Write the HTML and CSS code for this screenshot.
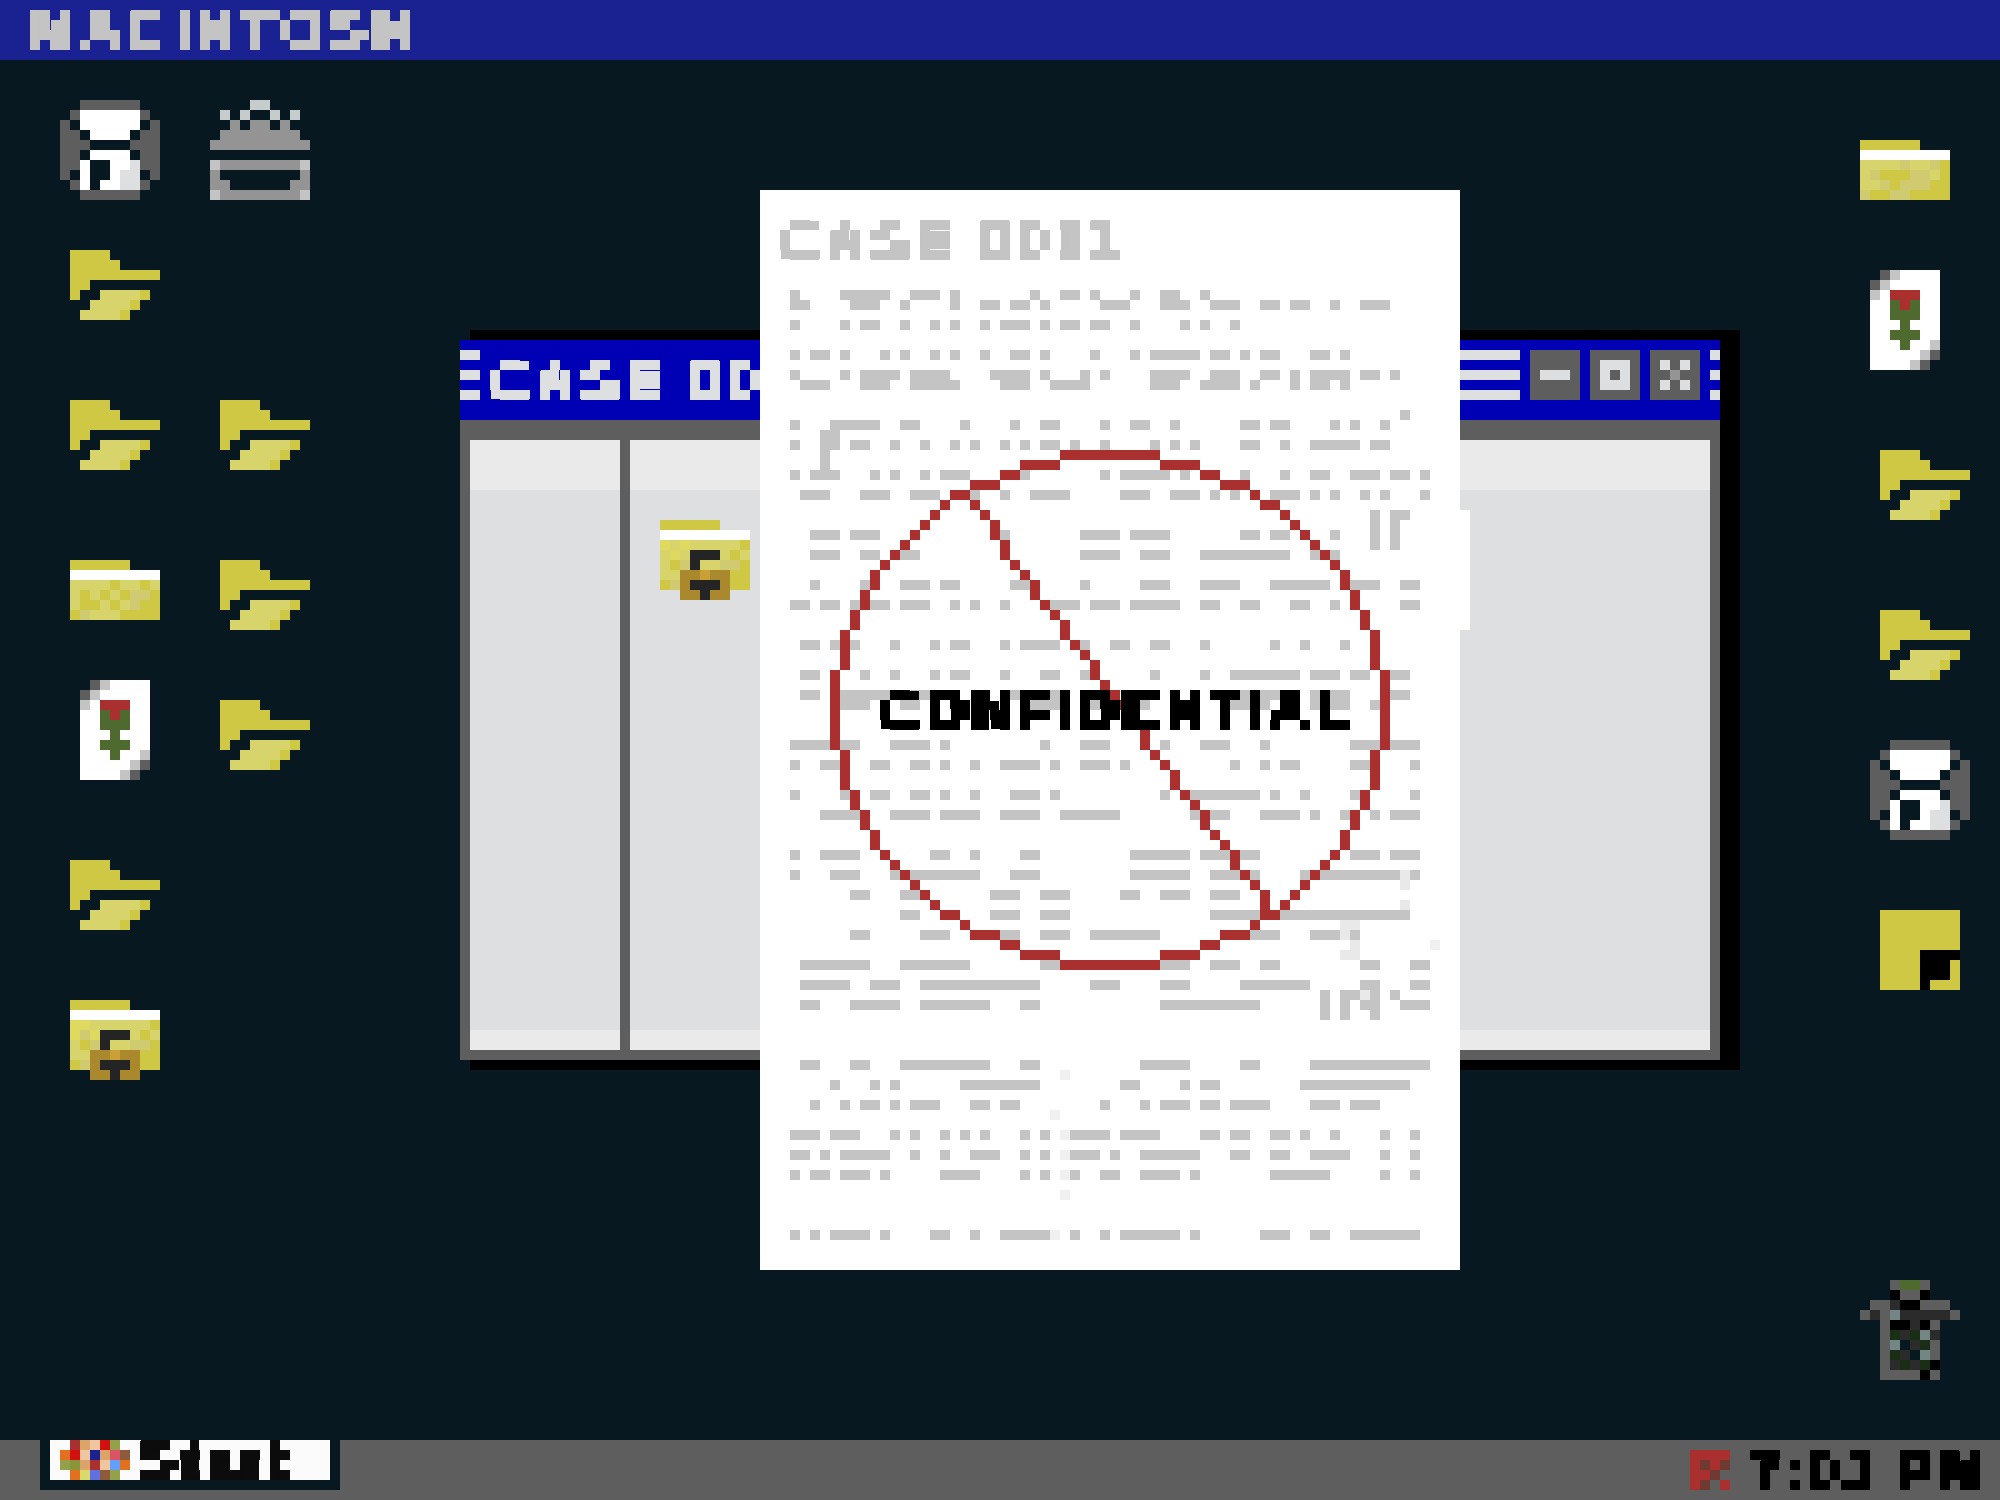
FILE: index.html
```html
<!DOCTYPE html>
<html lang="en">
<head>
  <meta charset="UTF-8">
  <title>Macintosh</title>
  <link rel="stylesheet" href="styles.css">
</head>
<body>

  <!-- shared pixel icons, one unit = one 10px cell -->
  <svg class="defs" aria-hidden="true">
    <filter id="pixelate" x="0" y="0" width="100%" height="100%" color-interpolation-filters="sRGB">
      <feFlood x="4" y="4" width="2" height="2" flood-color="#000"/>
      <feComposite width="10" height="10"/>
      <feTile result="grid"/>
      <feComposite in="SourceGraphic" in2="grid" operator="in"/>
      <feMorphology operator="dilate" radius="4"/>
      <feComponentTransfer><feFuncA type="discrete" tableValues="0 1"/></feComponentTransfer>
    </filter>

    <g id="open-folder">
      <path class="yd" d="M0 .5H4M0 1.5H5M0 2.5H9M0 3.5H2M0 4.5H1M7 4.5H8M6 5.5H7M5 6.5H6"/>
      <path class="yl" d="M3 4.5H7M2 5.5H6M1 6.5H5"/>
    </g>
    <g id="closed-folder">
      <path class="yd" d="M0 .5H6M4 2.5H5M7 2.5H8M1 3.5H2M3 3.5H4M5 3.5H6M8 3.5H9M1 4.5H3M4 4.5H5M7 4.5H9M0 5.5H1M5 5.5H9"/>
      <path class="wh" d="M0 1.5H9"/>
      <path class="yl" d="M0 2.5H4M5 2.5H7M8 2.5H9M0 3.5H1M2 3.5H3M4 3.5H5M0 4.5H1M3 4.5H4M5 4.5H6M2 5.5H5"/>
      <path class="yp" d="M6 3.5H8M6 4.5H7M1 5.5H2"/>
    </g>
    <g id="closed-folder-b">
      <path class="yd" d="M0 .5H6M8 2.5H9M2 3.5H5M8 3.5H9M3 4.5H4M7 4.5H9M1 5.5H3M5 5.5H9"/>
      <path class="wh" d="M0 1.5H9"/>
      <path class="yl" d="M0 2.5H4M5 2.5H7M0 3.5H1M7 3.5H8M0 4.5H2"/>
      <path class="yp" d="M4 2.5H5M7 2.5H8M1 3.5H2M5 3.5H7M2 4.5H3M4 4.5H7M0 5.5H1M3 5.5H5"/>
    </g>
    <g id="locked-folder">
      <path class="yd" d="M0 .5H6M8 2.5H9M7 3.5H8M1 4.5H2M8 4.5H9M7 5.5H9M0 6.5H1M7 6.5H9"/>
      <path class="wh" d="M0 1.5H9"/>
      <path class="yb" d="M0 2.5H2M0 3.5H1M2 3.5H3"/>
      <path class="yl" d="M2 2.5H8M6 3.5H7M8 3.5H9M0 4.5H1M4 4.5H6M0 5.5H2"/>
      <path class="yp" d="M1 3.5H2M2 4.5H3M6 4.5H8M1 6.5H2"/>
      <path class="ink" d="M3 3.5H6M3 4.5H4M3 6.5H6M4 7.5H5"/>
      <path class="br" d="M2 5.5H4M5 5.5H7M2 6.5H3M6 6.5H7M2 7.5H4M5 7.5H7"/>
      <path class="or" d="M4 5.5H5"/>
    </g>
    <g id="locked-folder-b">
      <path class="yd" d="M0 .5H6M8 2.5H9M7 3.5H8M1 4.5H2M8 4.5H9M7 5.5H9M0 6.5H1M7 6.5H9"/>
      <path class="wh" d="M0 1.5H9"/>
      <path class="yb" d="M0 2.5H1M2 2.5H3M1 3.5H2"/>
      <path class="yl" d="M1 2.5H2M3 2.5H8M0 3.5H1M2 3.5H3M6 3.5H7M8 3.5H9M0 4.5H1M4 4.5H6M0 5.5H2"/>
      <path class="yp" d="M2 4.5H3M6 4.5H8M1 6.5H2"/>
      <path class="ink" d="M3 3.5H6M3 4.5H4M3 6.5H6M4 7.5H5"/>
      <path class="br" d="M2 5.5H4M5 5.5H7M2 6.5H3M6 6.5H7M2 7.5H4M5 7.5H7"/>
      <path class="or" d="M4 5.5H5"/>
    </g>
    <g id="disk">
      <path class="gr" d="M2 .5H8M1 1.5H2M8 1.5H9M0 2.5H1M9 2.5H10M0 3.5H2M8 3.5H10M0 4.5H3M7 4.5H10M0 5.5H2M8 5.5H10M0 6.5H2M8 6.5H10M0 7.5H1M9 7.5H10M1 8.5H2M8 8.5H9M2 9.5H8"/>
      <path class="wh" d="M2 1.5H8M2 2.5H8M3 3.5H7M3 5.5H7M2 6.5H3M5 6.5H7M2 7.5H3M5 7.5H6M2 8.5H3M4 8.5H6"/>
      <path class="lg" d="M7 6.5H8M6 7.5H8M6 8.5H8"/>
    </g>
    <g id="printer">
      <path class="pt" d="M4 .5H6M1 1.5H2M3 1.5H4M6 1.5H7M8 1.5H9"/>
      <path class="pg" d="M2 2.5H3M4 2.5H6M7 2.5H8M1 3.5H9M0 4.5H10M1 6.5H9M0 7.5H1M9 7.5H10M0 8.5H2M8 8.5H10M1 9.5H9"/>
      <path class="pc" d="M0 6.5H1M9 6.5H10M0 9.5H1M9 9.5H10"/>
    </g>
    <g id="rose-card">
      <path class="wh" d="M3 .5H7M2 1.5H7M1 2.5H2M5 2.5H7M0 3.5H2M5 3.5H7M0 4.5H2M5 4.5H7M0 5.5H3M4 5.5H7M0 6.5H2M5 6.5H7M0 7.5H3M4 7.5H6M0 8.5H5M0 9.5H4"/>
      <path class="gr" d="M1 .5H2M0 1.5H1M6 8.5H7M5 9.5H6"/>
      <path class="pc" d="M2 .5H3M1 1.5H2M0 2.5H1M6 7.5H7M5 8.5H6M4 9.5H5"/>
      <path class="rd" d="M2 2.5H5M3 3.5H4"/>
      <path class="gn" d="M2 3.5H3M4 3.5H5M2 4.5H5M3 5.5H4M2 6.5H5M3 7.5H4"/>
    </g>
    <g id="sticky">
      <path class="yd" d="M0 .5H8M0 1.5H8M0 2.5H8M0 3.5H8M0 4.5H4M0 5.5H4M7 5.5H8M0 6.5H4M7 6.5H8M0 7.5H4M5 7.5H8"/>
      <path class="bk" d="M4 4.5H8M4 5.5H7M4 6.5H7M4 7.5H5"/>
    </g>
    <g id="trash">
      <path class="gr" d="M3 .5H4M6 .5H7M4 1.5H6M1 2.5H3M6 2.5H9M0 3.5H1M2 3.5H3M9 3.5H10M2 4.5H3M7 4.5H8M2 5.5H3M2 6.5H3M7 6.5H8M2 7.5H3M7 7.5H8M2 8.5H3M2 9.5H6M7 9.5H8"/>
      <path class="gn" d="M4 .5H6"/>
      <path class="bk" d="M3 1.5H4M6 1.5H7M4 2.5H6M3 4.5H5M6 4.5H7M7 8.5H8M6 9.5H7"/>
      <path class="dk" d="M3 2.5H4M1 3.5H2M4 3.5H9M5 4.5H6M4 5.5H5M7 5.5H8M5 6.5H6M4 7.5H5M3 8.5H4M5 8.5H6"/>
      <path class="tl" d="M3 3.5H4M6 5.5H7M3 6.5H4M6 7.5H7"/>
      <path class="dg" d="M3 5.5H4M5 5.5H6M6 6.5H7M3 7.5H4M4 8.5H5M6 8.5H7"/>
    </g>
  </svg>

  <div class="screen">

    <header class="menubar">
      <h1 class="pixel menu-title">MACINTOSH</h1>
    </header>

    <main class="desktop">

      <svg class="icon sz-disk at-disk1" viewBox="0 0 10 10"><use href="#disk"/></svg>
      <svg class="icon sz-disk at-print" viewBox="0 0 10 10"><use href="#printer"/></svg>
      <svg class="icon sz-open at-o1" viewBox="0 0 9 7"><use href="#open-folder"/></svg>
      <svg class="icon sz-open at-o2" viewBox="0 0 9 7"><use href="#open-folder"/></svg>
      <svg class="icon sz-open at-o3" viewBox="0 0 9 7"><use href="#open-folder"/></svg>
      <svg class="icon sz-closed at-c1" viewBox="0 0 9 6"><use href="#closed-folder"/></svg>
      <svg class="icon sz-open at-o4" viewBox="0 0 9 7"><use href="#open-folder"/></svg>
      <svg class="icon sz-card at-r1" viewBox="0 0 7 10"><use href="#rose-card"/></svg>
      <svg class="icon sz-open at-o5" viewBox="0 0 9 7"><use href="#open-folder"/></svg>
      <svg class="icon sz-open at-o6" viewBox="0 0 9 7"><use href="#open-folder"/></svg>
      <svg class="icon sz-locked at-l1" viewBox="0 0 9 8"><use href="#locked-folder"/></svg>

      <svg class="icon sz-closed at-c2" viewBox="0 0 9 6"><use href="#closed-folder-b"/></svg>
      <svg class="icon sz-card at-r2" viewBox="0 0 7 10"><use href="#rose-card"/></svg>
      <svg class="icon sz-open at-o7" viewBox="0 0 9 7"><use href="#open-folder"/></svg>
      <svg class="icon sz-open at-o8" viewBox="0 0 9 7"><use href="#open-folder"/></svg>
      <svg class="icon sz-disk at-disk2" viewBox="0 0 10 10"><use href="#disk"/></svg>
      <svg class="icon sz-sticky at-sticky" viewBox="0 0 8 8"><use href="#sticky"/></svg>
      <svg class="icon sz-disk at-trash" viewBox="0 0 10 10"><use href="#trash"/></svg>

      <section class="window">
        <div class="titlebar">
          <span class="stripes stripes-left"></span>
          <span class="pixel win-title">CASE 0011</span>
          <span class="stripes stripes-fill"></span>
          <span class="win-btn"><svg viewBox="0 0 5 5"><path class="lt" d="M1 2.5H4"/></svg></span>
          <span class="win-btn"><svg viewBox="0 0 5 5"><path class="lt" d="M1 1.5H4M1 2.5H2M3 2.5H4M1 3.5H4"/></svg></span>
          <span class="win-btn"><svg viewBox="0 0 5 5"><path class="lt" d="M1 1.5H2M3 1.5H4M1 3.5H2M3 3.5H4"/><path class="pg" d="M2 2.5H3"/></svg></span>
          <span class="stripes stripes-right"></span>
        </div>
        <div class="win-body">
          <div class="pane pane-side"></div>
          <div class="pane pane-main">
            <svg class="icon-flow sz-locked" viewBox="0 0 9 8"><use href="#locked-folder-b"/></svg>
          </div>
        </div>
      </section>

      <article class="sheet">
        <svg class="marks" viewBox="0 0 70 108">
          <path class="ink-gray" d="M3 10.5H4M8 10.5H13M15 10.5H18M19 10.5H20M27 10.5H28M30 10.5H32M33 10.5H34M37 10.5H38M40 10.5H42M44 10.5H45
            M3 11.5H5M9 11.5H12M14 11.5H15M19 11.5H20M22 11.5H24M25 11.5H27M28 11.5H29M34 11.5H37M40 11.5H43M45 11.5H48M50 11.5H52M53 11.5H55M57 11.5H58M60 11.5H63
            M3 13.5H4M8 13.5H9M10 13.5H12M14 13.5H15M17 13.5H18M19 13.5H20M22 13.5H23M24 13.5H27M28 13.5H29M30 13.5H32M33 13.5H35M37 13.5H38M42 13.5H43M44 13.5H45M47 13.5H48
            M3 16.5H4M5 16.5H7M8 16.5H9M12 16.5H13M14 16.5H15M17 16.5H18M19 16.5H20M22 16.5H23M25 16.5H27M28 16.5H29M33 16.5H34M37 16.5H38M39 16.5H44M45 16.5H47M48 16.5H49M50 16.5H52M55 16.5H57M58 16.5H59
            M3 18.5H4M8 18.5H9M10 18.5H14M15 18.5H19M23 18.5H27M28 18.5H29M32 18.5H33M34 18.5H35M39 18.5H43M45 18.5H48M50 18.5H52M53 18.5H54M55 18.5H59M60 18.5H62M63 18.5H64
            M4 19.5H7M10 19.5H13M15 19.5H20M24 19.5H27M29 19.5H33M39 19.5H42M44 19.5H48M49 19.5H50M53 19.5H54M55 19.5H57M58 19.5H59
            M64 22.5H65
            M3 23.5H4M7 23.5H12M14 23.5H16M20 23.5H21M25 23.5H26M28 23.5H30M34 23.5H35M37 23.5H39M41 23.5H42M48 23.5H50M51 23.5H53M57 23.5H58M59 23.5H60M62 23.5H63
            M6 24.5H8
            M3 25.5H4M6 25.5H8M9 25.5H11M13 25.5H14M16 25.5H17M19 25.5H20M21 25.5H22M24 25.5H25M26 25.5H27M28 25.5H30M31 25.5H32M34 25.5H35M39 25.5H40M41 25.5H42M43 25.5H44M48 25.5H50M52 25.5H53M55 25.5H60M61 25.5H63
            M6 26.5H7M6 27.5H7
            M3 28.5H4M5 28.5H8M11 28.5H12M13 28.5H14M16 28.5H17M18 28.5H21M26 28.5H27M34 28.5H35M36 28.5H41M42 28.5H43M48 28.5H49M52 28.5H53M55 28.5H57M59 28.5H62M63 28.5H65M66 28.5H67
            M4 30.5H7M10 30.5H13M15 30.5H18M21 30.5H22M24 30.5H25M27 30.5H31M36 30.5H39M41 30.5H44M45 30.5H46M47 30.5H48M51 30.5H54M55 30.5H56M57 30.5H58M60 30.5H61M62 30.5H63M66 30.5H67
            M63 32.5H65M61 32.5H62M61 33.5H62M63 33.5H64
            M5 34.5H8M9 34.5H12M24 34.5H25M32 34.5H36M37 34.5H41M48 34.5H50M51 34.5H53M57 34.5H58M61 34.5H62M63 34.5H64
            M61 35.5H62M63 35.5H64
            M5 36.5H8M10 36.5H12M14 36.5H16M32 36.5H36M38 36.5H41M44 36.5H53M55 36.5H56M57 36.5H58
            M5 39.5H6M10 39.5H11M14 39.5H17M18 39.5H20M25 39.5H27M32 39.5H33M38 39.5H41M44 39.5H48M51 39.5H57M59 39.5H62M64 39.5H66
            M3 41.5H5M6 41.5H8M9 41.5H10M11 41.5H13M14 41.5H17M19 41.5H20M21 41.5H22M24 41.5H25M29 41.5H32M33 41.5H36M37 41.5H42M44 41.5H46M48 41.5H50M53 41.5H55M57 41.5H58M64 41.5H66
            M4 45.5H6M7 45.5H8M9 45.5H10M13 45.5H14M17 45.5H18M19 45.5H21M24 45.5H25M26 45.5H30M32 45.5H33M35 45.5H37M39 45.5H41M44 45.5H45M51 45.5H52M54 45.5H55M58 45.5H59
            M4 48.5H6M10 48.5H11M13 48.5H14M17 48.5H18M19 48.5H21M24 48.5H25M28 48.5H30M32 48.5H33M39 48.5H40M44 48.5H45M47 48.5H54M55 48.5H58M59 48.5H61M63 48.5H65
            M4 50.5H6M8 50.5H13M15 50.5H17M25 50.5H26M29 50.5H30M48 50.5H49M50 50.5H52M55 50.5H56M57 50.5H59M63 50.5H65
            M8 51.5H11M14 51.5H16M17 51.5H18M20 51.5H21M22 51.5H23M27 51.5H30M33 51.5H34M35 51.5H36M38 51.5H39M47 51.5H49M50 51.5H51M55 51.5H56M57 51.5H59M61 51.5H62
            M3 55.5H7M8 55.5H10M13 55.5H17M18 55.5H19M28 55.5H29M32 55.5H35M40 55.5H41M44 55.5H47M50 55.5H51M59 55.5H62M63 55.5H66
            M3 57.5H4M6 57.5H8M11 57.5H13M15 57.5H17M18 57.5H19M21 57.5H22M24 57.5H28M29 57.5H30M32 57.5H35M36 57.5H37M47 57.5H48M50 57.5H51M52 57.5H54M59 57.5H61M65 57.5H66
            M3 60.5H4M8 60.5H9M11 60.5H13M15 60.5H17M18 60.5H19M21 60.5H22M25 60.5H28M29 60.5H30M40 60.5H41M43 60.5H50M51 60.5H52M54 60.5H55M59 60.5H60M65 60.5H66
            M6 62.5H10M13 62.5H17M18 62.5H22M24 62.5H28M30 62.5H36M43 62.5H44M45 62.5H47M50 62.5H54M55 62.5H56M58 62.5H59M61 62.5H62M63 62.5H66
            M3 66.5H4M6 66.5H10M17 66.5H19M21 66.5H22M26 66.5H28M37 66.5H43M44 66.5H47M48 66.5H50M59 66.5H62M63 66.5H66
            M3 68.5H4M7 68.5H10M13 68.5H14M15 68.5H22M25 68.5H28M37 68.5H43M45 68.5H48M49 68.5H50M54 68.5H55M56 68.5H64M65 68.5H66
            M9 70.5H11M14 70.5H16M23 70.5H26M28 70.5H31M36 70.5H38M40 70.5H43M45 70.5H48
            M14 72.5H16M23 72.5H26M28 72.5H31M45 72.5H50M52 72.5H65
            M9 74.5H11M16 74.5H19M24 74.5H26M28 74.5H31M33 74.5H40M49 74.5H52M55 74.5H58M59 74.5H60
            M4 77.5H11M14 77.5H21M28 77.5H30M40 77.5H43M45 77.5H48M50 77.5H52M60 77.5H62M65 77.5H67
            M4 79.5H9M11 79.5H14M16 79.5H28M33 79.5H36M40 79.5H43M48 79.5H55M60 79.5H62M65 79.5H67
            M56 80.5H57M58 80.5H60M61 80.5H62M63 80.5H64
            M4 81.5H6M9 81.5H14M16 81.5H23M26 81.5H28M40 81.5H50M56 81.5H57M58 81.5H59M60 81.5H62M64 81.5H67
            M56 82.5H57M58 82.5H59M61 82.5H62
            M4 87.5H6M9 87.5H11M14 87.5H23M26 87.5H28M38 87.5H43M48 87.5H50M55 87.5H67
            M7 89.5H8M11 89.5H12M13 89.5H14M20 89.5H28M36 89.5H38M42 89.5H43M44 89.5H46M54 89.5H65
            M5 91.5H6M8 91.5H9M10 91.5H12M13 91.5H14M15 91.5H18M21 91.5H23M24 91.5H26M34 91.5H35M38 91.5H39M40 91.5H43M44 91.5H46M47 91.5H51M55 91.5H58M59 91.5H62
            M3 94.5H6M7 94.5H10M13 94.5H14M15 94.5H16M18 94.5H19M20 94.5H21M22 94.5H23M26 94.5H27M28 94.5H29M31 94.5H35M36 94.5H40M44 94.5H46M47 94.5H49M51 94.5H53M54 94.5H55M57 94.5H58M62 94.5H63M65 94.5H66
            M3 96.5H5M6 96.5H7M8 96.5H13M15 96.5H16M18 96.5H19M21 96.5H24M26 96.5H27M28 96.5H29M31 96.5H34M35 96.5H36M38 96.5H44M47 96.5H49M51 96.5H53M55 96.5H59M62 96.5H63M65 96.5H66
            M3 98.5H4M5 98.5H7M8 98.5H11M12 98.5H13M18 98.5H22M26 98.5H27M28 98.5H29M31 98.5H32M34 98.5H36M38 98.5H42M43 98.5H44M51 98.5H57M62 98.5H63M65 98.5H66
            M3 104.5H4M5 104.5H6M7 104.5H11M12 104.5H13M17 104.5H19M21 104.5H22M24 104.5H29M31 104.5H32M34 104.5H35M36 104.5H42M43 104.5H44M50 104.5H53M55 104.5H57M59 104.5H66"/>
          <path class="ink-pale" d="M64 68.5H65M64 69.5H65M64 71.5H65M58 73.5H60M58 74.5H59M59 75.5H60M58 76.5H60M60 80.5H61"/>
          <path class="ink-faint" d="M67 75.5H68M30 88.5H31M29 92.5H30M30 94.5H31M30 96.5H31M30 98.5H31M30 100.5H31M29 104.5H30"/>
          <path class="rd" d="M30 26.5H40M26 27.5H30M40 27.5H44M24 28.5H26M44 28.5H46M21 29.5H24M46 29.5H49M19 30.5H21M49 30.5H50M18 31.5H19M50 31.5H52M21 31.5H22M17 32.5H18M52 32.5H53M22 32.5H23M16 33.5H17M53 33.5H54M23 33.5H24
            M15 34.5H16M54 34.5H55M23 34.5H24M14 35.5H15M55 35.5H56M24 35.5H25M13 36.5H14M56 36.5H57M24 36.5H25M12 37.5H13M57 37.5H58M25 37.5H26M11 38.5H12M58 38.5H59M26 38.5H27M11 39.5H12M58 39.5H59M27 39.5H28M10 40.5H11M59 40.5H60M27 40.5H28M10 41.5H11M59 41.5H60M28 41.5H29M9 42.5H10M60 42.5H61M29 42.5H30M9 43.5H10M60 43.5H61M30 43.5H31
            M8 44.5H9M30 44.5H31M61 44.5H62M8 45.5H9M31 45.5H32M61 45.5H62M8 46.5H9M32 46.5H33M61 46.5H62M8 47.5H9M33 47.5H34M61 47.5H62M7 48.5H8M33 48.5H34M62 48.5H63M7 49.5H8M34 49.5H35M62 49.5H63M7 50.5H8M35 50.5H36M62 50.5H63M7 51.5H8M36 51.5H37M62 51.5H63M7 52.5H8M37 52.5H38M62 52.5H63M7 53.5H8M37 53.5H38M62 53.5H63M7 54.5H8M38 54.5H39M62 54.5H63M7 55.5H8M38 55.5H39M62 55.5H63
            M8 56.5H9M39 56.5H40M61 56.5H62M8 57.5H9M40 57.5H41M61 57.5H62M8 58.5H9M41 58.5H42M61 58.5H62M8 59.5H9M41 59.5H42M61 59.5H62M9 60.5H10M42 60.5H43M60 60.5H61M9 61.5H10M43 61.5H44M60 61.5H61M10 62.5H11M44 62.5H45M59 62.5H60M10 63.5H11M44 63.5H45M59 63.5H60M11 64.5H12M45 64.5H46M58 64.5H59M11 65.5H12M46 65.5H47M58 65.5H59M12 66.5H13M47 66.5H48M57 66.5H58M13 67.5H14M47 67.5H48M56 67.5H57M14 68.5H15M48 68.5H49M55 68.5H56M15 69.5H16M49 69.5H50M54 69.5H55M16 70.5H17M50 70.5H51M53 70.5H54M17 71.5H18M50 71.5H51M52 71.5H53M18 72.5H20M50 72.5H52M20 73.5H21M49 73.5H50M21 74.5H24M46 74.5H49M24 75.5H26M44 75.5H46M26 76.5H30M40 76.5H44M30 77.5H40"/>
        </svg>
        <h2 class="pixel sheet-title">CASE 0011</h2>
        <strong class="pixel stamp">CONFIDENTIAL</strong>
      </article>

    </main>

    <footer class="taskbar">
      <div class="start">
        <div class="start-inner">
          <svg class="start-logo" viewBox="0 0 7 4">
            <path class="s-dred" d="M1 .5H2M3 2.5H4"/>
            <path class="s-tan" d="M2 .5H3M4 1.5H5M2 2.5H3"/>
            <path class="s-peach" d="M3 .5H4M2 1.5H3M4 2.5H5"/>
            <path class="s-red" d="M4 .5H5M1 1.5H2"/>
            <path class="s-olive" d="M5 .5H6M0 2.5H1M5 3.5H6"/>
            <path class="s-olive2" d="M1 2.5H2"/>
            <path class="s-orange" d="M0 1.5H1M6 2.5H7M1 3.5H2"/>
            <path class="s-navy" d="M3 1.5H4"/>
            <path class="s-pink" d="M5 1.5H6"/>
            <path class="s-brown" d="M6 1.5H7M4 3.5H5"/>
            <path class="s-blue" d="M5 2.5H6"/>
            <path class="s-yellow" d="M2 3.5H3"/>
            <path class="s-indigo" d="M3 3.5H4"/>
          </svg>
          <span class="pixel start-label">Start</span>
        </div>
      </div>
      <div class="clock">
        <svg class="clock-icon" viewBox="0 0 4 4">
          <path class="rd" d="M0 .5H4M0 1.5H1M2 1.5H3M0 2.5H2M0 3.5H1M3 3.5H4"/>
          <path class="clk-b" d="M1 1.5H2M3 1.5H4M2 2.5H3M1 3.5H2"/>
        </svg>
        <span class="pixel clock-time">7:03 PM</span>
      </div>
    </footer>

  </div>

</body>
</html>
```

FILE: styles.css
```css
* { box-sizing: border-box; }

body {
  margin: 0;
  background: #071821;
  font-family: "Liberation Sans", sans-serif;
}

.defs {
  position: absolute;
  width: 0;
  height: 0;
}

.screen {
  display: flex;
  flex-direction: column;
  width: 2000px;
  height: 1500px;
  overflow: hidden;
}

/* pixel text */
.pixel {
  display: block;
  margin: 0;
  font-size: 54px;
  font-weight: bold;
  line-height: 40px;
  height: 40px;
  letter-spacing: 7px;
  white-space: nowrap;
  -webkit-text-stroke: 3px currentColor;
  filter: url(#pixelate);
}

/* svg pixels are drawn as 1 unit strokes */
svg { display: block; shape-rendering: crispEdges; overflow: visible; }
path { fill: none; stroke-width: 1; }

.yd { stroke: #cfc845; }
.yl { stroke: #d8d46c; }
.yp { stroke: #d0cb70; }
.yb { stroke: #e0d95f; }
.wh { stroke: #fff; }
.gr { stroke: #5e5e5e; }
.lg { stroke: #dedfe1; }
.lt { stroke: #dedfe1; }
.pt { stroke: #c6cbcb; }
.pg { stroke: #949494; }
.pc { stroke: #c4c4c4; }
.rd { stroke: #aa3030; }
.gn { stroke: #4f6a2e; }
.br { stroke: #aa882e; }
.or { stroke: #c9a035; }
.ink { stroke: #242424; }
.bk { stroke: #000; }
.dk { stroke: #2b2b2b; }
.tl { stroke: #748585; }
.dg { stroke: #1a2e16; }

/* top bar */
.menubar {
  height: 60px;
  padding: 10px 30px;
  background: #1a2291;
}
.menu-title { color: #c4c4c4; }

/* desktop */
.desktop {
  position: relative;
  flex: 1;
  background: #071821;
}

.icon { position: absolute; }
.sz-disk { width: 100px; height: 100px; }
.sz-open { width: 90px; height: 70px; }
.sz-closed { width: 90px; height: 60px; }
.sz-locked { width: 90px; height: 80px; }
.sz-card { width: 70px; height: 100px; }
.sz-sticky { width: 80px; height: 80px; }

.at-disk1 { left: 60px; top: 40px; }
.at-print { left: 210px; top: 40px; }
.at-o1 { left: 70px; top: 190px; }
.at-o2 { left: 70px; top: 340px; }
.at-o3 { left: 220px; top: 340px; }
.at-c1 { left: 70px; top: 500px; }
.at-o4 { left: 220px; top: 500px; }
.at-r1 { left: 80px; top: 620px; }
.at-o5 { left: 220px; top: 640px; }
.at-o6 { left: 70px; top: 800px; }
.at-l1 { left: 70px; top: 940px; }

.at-c2 { left: 1860px; top: 80px; }
.at-r2 { left: 1870px; top: 210px; }
.at-o7 { left: 1880px; top: 390px; }
.at-o8 { left: 1880px; top: 550px; }
.at-disk2 { left: 1870px; top: 680px; }
.at-sticky { left: 1880px; top: 850px; }
.at-trash { left: 1860px; top: 1220px; }

/* window */
.window {
  position: absolute;
  left: 460px;
  top: 280px;
  z-index: 1;
  display: flex;
  flex-direction: column;
  width: 1260px;
  height: 720px;
}
.window::before {
  content: "";
  position: absolute;
  inset: -10px -20px -10px 10px;
  z-index: -1;
  background: #000;
}

.titlebar {
  display: flex;
  gap: 10px;
  height: 80px;
  padding-top: 10px;
  background: #0000b4;
}
.stripes {
  height: 50px;
  background: repeating-linear-gradient(#dedfe1 0 10px, #0000b4 10px 20px);
}
.stripes-left { width: 20px; }
.stripes-fill { flex: 1; }
.stripes-right { width: 10px; }
.win-title { margin-top: 10px; color: #dedfe1; }
.win-btn {
  width: 50px;
  height: 50px;
  background: #5e5e5e;
}

.win-body {
  display: flex;
  flex: 1;
  gap: 10px;
  padding: 20px 10px 10px;
  background: #5e5e5e;
}
.pane {
  background: #dedfe1;
  border-top: 50px solid #eaeaea;
  border-bottom: 20px solid #eaeaea;
}
.pane-side { width: 150px; }
.pane-main { flex: 1; padding: 30px; }

/* document on top of the window */
.sheet {
  position: absolute;
  left: 760px;
  top: 130px;
  z-index: 2;
  width: 700px;
  height: 1080px;
  padding: 30px 20px;
  background: #fff;
}
.sheet::after {
  content: "";
  position: absolute;
  left: 100%;
  top: 320px;
  width: 10px;
  height: 120px;
  background: #fff;
}
.marks {
  position: absolute;
  left: 0;
  top: 0;
  width: 700px;
  height: 1080px;
}
.ink-gray { stroke: #c4c4c4; }
.ink-pale { stroke: #e9e9e9; }
.ink-faint { stroke: #f0f0f0; }

.sheet-title { position: relative; color: #c4c4c4; }
.stamp {
  position: absolute;
  left: 120px;
  top: 500px;
  color: #000;
  letter-spacing: 6px;
}

/* task bar */
.taskbar {
  display: flex;
  justify-content: space-between;
  height: 60px;
  padding-left: 40px;
  background: #5e5e5e;
}
.start {
  height: 50px;
  padding: 0 10px 10px;
  background: #071821;
}
.start-inner {
  display: flex;
  align-items: center;
  gap: 10px;
  width: 280px;
  height: 40px;
  padding-left: 10px;
  background: #fbfbfb;
}
.start-logo { width: 70px; height: 40px; }
.start-label { color: #0c0c0c; letter-spacing: 6px; }

.s-dred { stroke: #aa3030; }
.s-tan { stroke: #dba468; }
.s-peach { stroke: #f1c59e; }
.s-red { stroke: #d21010; }
.s-olive { stroke: #94a04a; }
.s-olive2 { stroke: #88953a; }
.s-orange { stroke: #e3701f; }
.s-navy { stroke: #1a2291; }
.s-pink { stroke: #dc5464; }
.s-brown { stroke: #8e5a3c; }
.s-blue { stroke: #62a0fe; }
.s-yellow { stroke: #dada6a; }
.s-indigo { stroke: #6070e0; }

.clock {
  display: flex;
  gap: 20px;
  width: 310px;
  padding-top: 10px;
}
.clock-icon { width: 40px; height: 40px; }
.clk-b { stroke: #6e3a32; }
.clock-time { color: #000; letter-spacing: 5px; }
```
